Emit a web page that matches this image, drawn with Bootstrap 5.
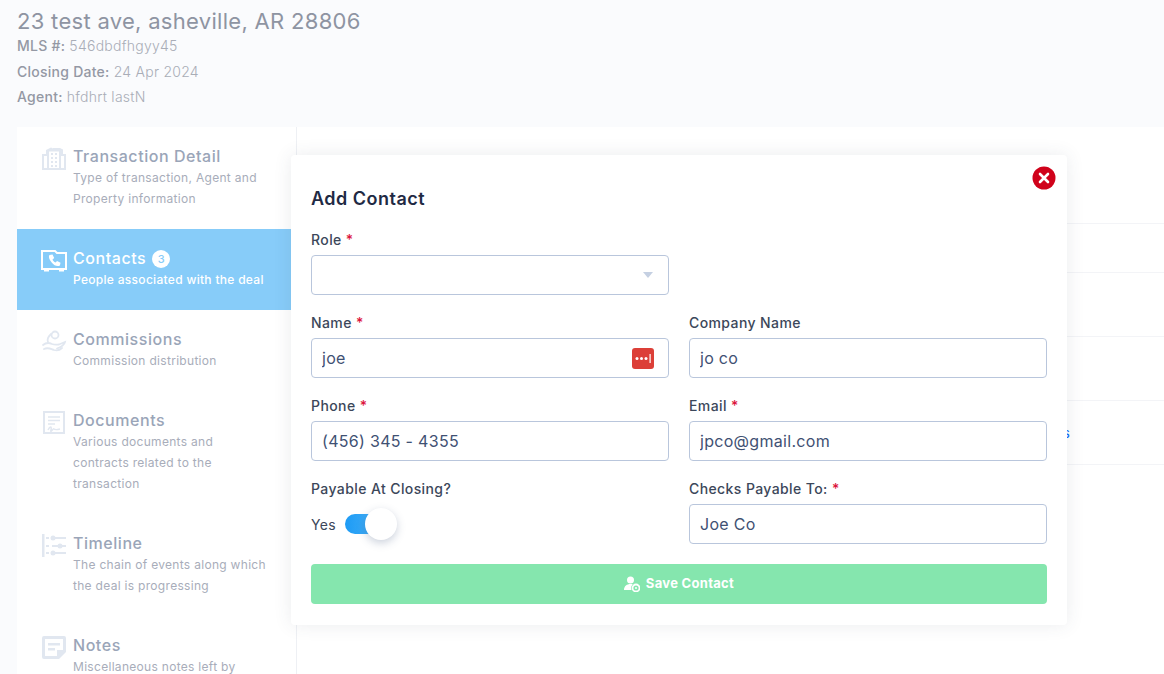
<!DOCTYPE html>
<html lang="en">
<head>
<meta charset="utf-8">
<title>Add Contact</title>
<link rel="stylesheet" href="https://cdn.jsdelivr.net/npm/bootstrap@5.3.0/dist/css/bootstrap.min.css">
<style>
html,body{height:100%}
body{background:#fafbfd;font-family:Inter,"Liberation Sans",sans-serif;overflow:hidden;color:#2f3a4d}
.page-shell{height:674px;position:relative;overflow:hidden;padding-left:17px}
.deal-head{height:127px;padding-top:8px}
.deal-title{font-size:22px;line-height:27px;font-weight:400;color:#8e94a2;margin:0 0 -2px;letter-spacing:.3px}
.deal-meta{font-size:14px;line-height:25.5px;color:#a9adb7;font-weight:300;margin:0;letter-spacing:.25px}
.deal-meta b{font-weight:500;color:#9498a4;letter-spacing:.25px}
.deal-card{background:#fff;height:547px;display:flex}
.side-nav{width:280px;border-right:1px solid #eef0f4;flex:none}
.nav-entry{display:flex;padding:19px 0 0 24px;gap:6px;color:#9aa5b8}
.nav-entry.is-on{background:#87ccf9;color:#fff}
.nav-icon{width:26px;height:26px;flex:none;color:#e1e7f0}
.is-on .nav-icon{color:#fff}
.entry-name{font-size:16px;line-height:20px;font-weight:500;letter-spacing:.55px}
.entry-text{font-size:12px;line-height:21px;color:#a8adba;margin-top:1px;width:194px;padding-bottom:20px;letter-spacing:.3px}
.is-on .entry-text{color:#fff;font-weight:500}
.count-pill{display:inline-flex;align-items:center;justify-content:center;width:18px;height:18px;border-radius:50%;background:#fff;color:#87ccf9;font-size:11px;margin-left:6px;vertical-align:1px;letter-spacing:0}
.data-pane{flex:1;padding-top:96px}
.data-row{border-bottom:1px solid #f3f4f7;display:flex;justify-content:flex-end;align-items:center;padding-right:94px;font-size:14px;color:#4a9be8}
.data-row-first{border-top:1px solid #f3f4f7;height:50px}
.data-row-next{height:64px}
.dialog-box{position:absolute;left:291px;top:155px;width:776px;height:470px;background:#fff;border-radius:4px;box-shadow:0 0 18px rgba(60,70,90,.1);padding:33px 20px 0}
.dialog-title{font-size:18px;line-height:22px;font-weight:600;color:#1f2a44;margin:0 0 20px;letter-spacing:.5px}
.form-grid{display:grid;grid-template-columns:358px 358px;column-gap:20px;row-gap:18px}
.field-label{display:block;font-size:14px;line-height:20px;font-weight:500;color:#3c475a;margin-bottom:5px;letter-spacing:.4px}
.field-label i{color:#dc143c;font-style:normal}
.form-control.field-box,.form-select.field-box{height:40px;border:1px solid #b9c6dc;border-radius:4px;font-size:16px;color:#3f5173;padding:0 10px;font-family:inherit;box-shadow:none;letter-spacing:.3px}
.form-select.field-box{background-image:url("data:image/svg+xml,%3Csvg xmlns='http://www.w3.org/2000/svg' width='12' height='7'%3E%3Cpath d='M1 0h10L6 6z' fill='%23c5d0e2'/%3E%3C/svg%3E");background-position:right 14px center;background-size:12px 7px}
.lp-mark{position:absolute;right:15px;top:10px;width:22px;height:21px}
.switch-line{display:flex;align-items:center;gap:9px;height:40px;font-size:14px;letter-spacing:.3px;color:#3c475a}
.switch-track{position:relative;width:36px;height:20px;border-radius:10px;background:linear-gradient(90deg,#1d9bf5,#4ab2f7);display:block}
.switch-knob{position:absolute;left:20px;top:-6px;width:32px;height:32px;border-radius:50%;background:#fff;box-shadow:0 3px 8px rgba(70,90,130,.28)}
.save-btn{height:40px;background:#85e6ae;border:0;border-radius:4px;color:#fff;font-size:13px;font-weight:700;letter-spacing:.3px;width:736px;margin-top:20px;display:flex;align-items:center;justify-content:center;gap:6px}
.save-btn:hover,.save-btn:disabled{background:#85e6ae;color:#fff;opacity:1}
.close-dot{position:absolute;left:741px;top:11px;width:24px;height:24px;padding:0;border:0;background:none;line-height:0}
</style>
</head>
<body>
<div class="page-shell">
  <header class="deal-head">
    <h1 class="deal-title">23 test ave, asheville, AR 28806</h1>
    <p class="deal-meta"><b>MLS #:</b> 546dbdfhgyy45</p>
    <p class="deal-meta"><b>Closing Date:</b> 24 Apr 2024</p>
    <p class="deal-meta"><b>Agent:</b> hfdhrt lastN</p>
  </header>
  <div class="deal-card">
    <nav class="side-nav">
      <div class="nav-entry">
        <svg class="nav-icon" viewBox="0 0 26 26" fill="currentColor"><path fill-rule="evenodd" d="M1 8h4V4l5-2.500 2 1V2h7l3 1.500V8h3v16H1zM3 10v12h3V10zm17 0v12h3V10zM8 5.500V22h10V5.500z"/><path d="M10 7h2v2h-2zm4 0h2v2h-2zm-4 4h2v2h-2zm4 0h2v2h-2zm-4 4h2v2h-2zm4 0h2v2h-2zm-4 4h2v2h-2zm4 0h2v2h-2z"/></svg>
        <div><div class="entry-name">Transaction Detail</div><div class="entry-text">Type of transaction, Agent and Property information</div></div>
      </div>
      <div class="nav-entry is-on">
        <svg class="nav-icon" viewBox="0 0 26 26" fill="currentColor"><path fill="none" stroke="currentColor" stroke-width="2" d="M1 3h13l2 2h9v16H1z"/><path d="M3 21h5v2.500H3zm15 0h5v2.500h-5z"/><path d="M8.500 7l3-.6 1.700 3.600-1.700 1.500c.6 1.500 1.500 2.400 3 3l1.600-1.600 3.400 1.800-.6 2.800c-2.300 1.500-6 0-8-2.700S7 9 8.500 7z"/></svg>
        <div><div class="entry-name">Contacts<span class="count-pill">3</span></div><div class="entry-text">People associated with the deal</div></div>
      </div>
      <div class="nav-entry">
        <svg class="nav-icon" viewBox="0 0 26 26" fill="none" stroke="currentColor" stroke-width="1.800" stroke-linecap="round"><circle cx="14" cy="6" r="3.500"/><path d="M10 5C7 8 6 11 7 13"/><path d="M2 16c3-2.500 6-2.500 9-1 2 .8 5 .8 7 .5l6-2.500c-1 4-5 5.500-8 6.500"/><path d="M3 20c4-2 7 0 10 1 3 .8 6 0 8-2"/></svg>
        <div><div class="entry-name">Commissions</div><div class="entry-text">Commission distribution</div></div>
      </div>
      <div class="nav-entry">
        <svg class="nav-icon" viewBox="0 0 26 26" fill="none" stroke="currentColor" stroke-width="2"><path d="M3 2h20v21H3z"/><path stroke-width="1.500" d="M7 7h12M7 10.500h12M7 14h7"/><path stroke-width="1.500" d="M7 20c2-4 4-4 3 0s2-2 3-1 2 1 6 0"/></svg>
        <div><div class="entry-name">Documents</div><div class="entry-text">Various documents and contracts related to the transaction</div></div>
      </div>
      <div class="nav-entry">
        <svg class="nav-icon" viewBox="0 0 26 26" fill="currentColor"><path d="M1 1h2.500v23H1zM5 4h3v2H5zm0 8h3v2H5zm0 7h3v2H5zM11 4h14v2H11zm0 8h14v2H11zm0 7h14v2H11z"/><circle cx="12" cy="5" r="2.500"/><circle cx="19" cy="13" r="2.500"/><circle cx="12" cy="20" r="2.500"/></svg>
        <div><div class="entry-name">Timeline</div><div class="entry-text">The chain of events along which the deal is progressing</div></div>
      </div>
      <div class="nav-entry">
        <svg class="nav-icon" viewBox="0 0 26 26" fill="currentColor"><path fill-rule="evenodd" d="M3 1h20a2 2 0 0 1 2 2v14l-7 7H3a2 2 0 0 1-2-2V3a2 2 0 0 1 2-2zm1 3v17h12v-6h6V4zM7 8h12v2.500H7zm0 5h7v2.500H7z"/></svg>
        <div><div class="entry-name">Notes</div><div class="entry-text">Miscellaneous notes left by team members</div></div>
      </div>
    </nav>
    <div class="data-pane">
      <div class="data-row data-row-first"></div>
      <div class="data-row data-row-next"></div>
      <div class="data-row data-row-next"></div>
      <div class="data-row data-row-next"><a class="text-decoration-none" href="#">Details</a></div>
    </div>
  </div>

  <div class="dialog-box" role="dialog" aria-label="Add Contact">
    <button class="close-dot" type="button" aria-label="Close">
      <svg width="24" height="24" viewBox="0 0 24 24"><circle cx="12" cy="12" r="11.500" fill="#d0021b"/><path d="M8 8l8 8M16 8l-8 8" stroke="#fff" stroke-width="2.600" stroke-linecap="round"/></svg>
    </button>
    <h2 class="dialog-title">Add Contact</h2>
    <div class="form-grid">
      <div>
        <label class="field-label">Role <i>*</i></label>
        <select class="form-select field-box" aria-label="Role"><option></option></select>
      </div>
      <div></div>
      <div>
        <label class="field-label">Name <i>*</i></label>
        <div class="position-relative">
          <input class="form-control field-box" value="joe">
          <svg class="lp-mark" viewBox="0 0 22 21"><rect width="22" height="21" rx="3" fill="#dc3f38"/><circle cx="5" cy="10.500" r="1.500" fill="#fff"/><circle cx="9.500" cy="10.500" r="1.500" fill="#fff"/><circle cx="14" cy="10.500" r="1.500" fill="#fff"/><rect x="17.500" y="6" width="1.200" height="9" fill="#fff"/></svg>
        </div>
      </div>
      <div>
        <label class="field-label">Company Name</label>
        <input class="form-control field-box" value="jo co">
      </div>
      <div>
        <label class="field-label">Phone <i>*</i></label>
        <input class="form-control field-box" value="(456) 345 - 4355">
      </div>
      <div>
        <label class="field-label">Email <i>*</i></label>
        <input class="form-control field-box" value="jpco@gmail.com">
      </div>
      <div>
        <label class="field-label">Payable At Closing?</label>
        <div class="switch-line">Yes <span class="switch-track"><span class="switch-knob"></span></span></div>
      </div>
      <div>
        <label class="field-label">Checks Payable To: <i>*</i></label>
        <input class="form-control field-box" value="Joe Co">
      </div>
    </div>
    <button class="btn save-btn" type="button">
      <svg width="16" height="16" viewBox="0 0 16 16" fill="#fff"><circle cx="6.500" cy="4" r="3.500"/><path d="M0 14c0-4 3-6 6.500-6 1 0 1.700.2 2.300.4A5 5 0 0 0 7.500 14z"/><circle cx="12" cy="12" r="3.500" fill="none" stroke="#fff" stroke-width="1.800"/><circle cx="12" cy="12" r="1"/></svg>
      Save Contact
    </button>
  </div>
</div>
</body>
</html>
